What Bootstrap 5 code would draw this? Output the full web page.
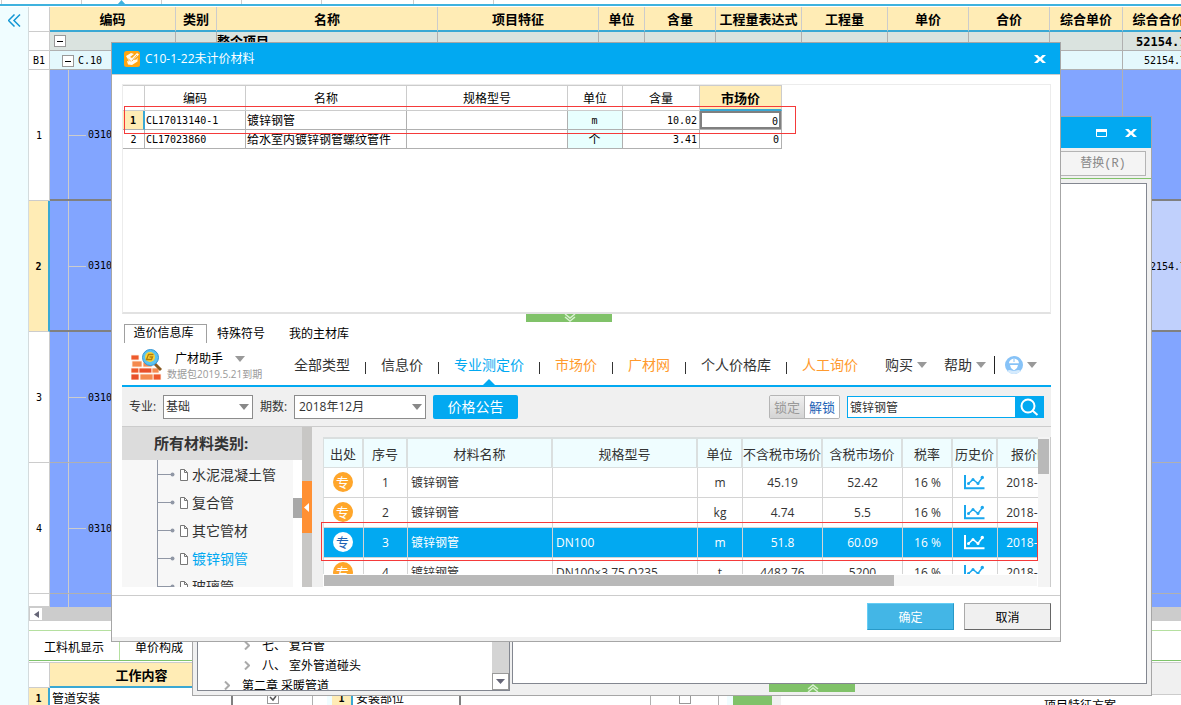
<!DOCTYPE html>
<html lang="zh-CN">
<head>
<meta charset="utf-8">
<meta name="viewport" content="width=device-width, initial-scale=1">
<title>C10-1-22未计价材料</title>
<link href="https://cdn.jsdelivr.net/npm/bootstrap@5.3.0/dist/css/bootstrap.min.css" rel="stylesheet">
<style>
  body { font-family: "Open Sans", "Noto Sans CJK SC", sans-serif; font-size: 12px; line-height: 16px; color: #000; background: #fff; }
  .fixed { font-family: "DejaVu Sans Mono", "Noto Sans CJK SC", monospace; font-size: 10px; }
  a, a:hover { color: inherit; text-decoration: none; }
  svg { display: block; flex: none; }

  /* top strip of the application */
  .strip { height: 6px; border-bottom: 2px solid #3fb2de; margin-bottom: 1px; }
  .strip span { width: 80px; border-right: 1px solid #ccc; }
  .strip svg { position: absolute; left: 117px; top: 0; }
  .rail { width: 29px; background: #f0fdff; border-right: 1px solid #d4dbdd; padding: 7px 0 0 8px; }

  /* spreadsheet style tables */
  .sheet { table-layout: fixed; border-collapse: separate; border-spacing: 0; }
  .sheet th, .sheet td { padding: 0; overflow: hidden; white-space: nowrap; vertical-align: middle; }
  .main-sheet { width: 1175px; }
  .main-sheet thead th { height: 25px; background: #ffecb5; border-right: 1px solid #ccc; border-bottom: 2px solid #3aa8d4; font-size: 13px; text-align: center; }
  .main-sheet thead th.corner { background: #fff; border-bottom: 1px solid #ccc; }
  .main-sheet td, .main-sheet tbody th { height: 19px; border-right: 1px solid #b0b0b0; border-bottom: 1px solid #b0b0b0; }
  .main-sheet tbody th { background: #fff; border-color: #ccc; font-weight: 400; text-align: center; padding-top: 2px; }
  .main-sheet .total td { background: #dae3df; }
  .main-sheet .total td.fixed, .main-sheet .part td.fixed { padding-top: 2px; }
  .main-sheet .part td { background: #e4f8fd; }
  .main-sheet .item td { height: 131px; background: #82a5ff; }
  .main-sheet .item.last td { height: 13px; border-bottom: 0; }
  .main-sheet .item.current td { border-bottom: 2px solid #808080; }
  .main-sheet .item.above td { border-bottom: 2px solid #808080; }
  .main-sheet .item.current td:last-child { background: #c0d0fc; padding-top: 2px; }
  .main-sheet .item.current th { background: #ffecb5; font-weight: 700; border-right: 2px solid #3aa8d4; }
  .fold { width: 12px; height: 12px; border: 1px solid #999; background: #fff; padding: 5px 2px; }
  .fold::before { content: ""; display: block; height: 1px; background: #000; }
  .twig { height: 100%; margin-left: 18px; border-left: 1px solid #ccc; display: flex; align-items: center; padding-top: 1px; }
  .twig i { width: 17px; border-top: 1px solid #ccc; margin-right: 2px; }
  .hbar { height: 14px; background: #ccc; }
  .hbar button { width: 14px; height: 14px; padding: 3px 4px; background: #fff; border: 1px solid #ccc; }

  /* lower docked panels */
  .dock-tabs { height: 31px; margin-top: 9px; border-top: 1px solid #b5e0a0; border-bottom: 1px solid #7fc46b; }
  .dock-tabs a { padding: 9px 15px 0; border-right: 1px solid #b5e0a0; }
  .dock { border-top: 1px solid #ccc; margin-top: 1px; }
  .dock-head { height: 25px; background: #ffecb5; border-bottom: 2px solid #3aa8d4; font-size: 13px; font-weight: 700; text-align: center; line-height: 24px; }
  .dock-row { height: 20px; line-height: 22px; }
  .rowno { width: 21px; background: #ffecb5; border-right: 2px solid #3aa8d4; font-weight: 700; text-align: center; line-height: 22px; }
  .tick { appearance: none; width: 12px; height: 12px; margin: 0; border: 1px solid #999; background: #fff; }
  .tick:checked { background: url("data:image/svg+xml,%3Csvg xmlns='http://www.w3.org/2000/svg' viewBox='0 0 10 10'%3E%3Cpath d='M2 4l3 3 3-4' fill='none' stroke='%23555' stroke-width='1.500'/%3E%3C/svg%3E") center / 10px 10px; }

  /* windows over the sheet */
  .win { position: absolute; border: 1px solid #a6a6a6; }
  .win-title { height: 31px; background: #02a9f1; color: #fff; }
  .win-title button, .bare { border: 0; padding: 0; background: none; }
  .back-win { top: 116px; left: 192px; right: 29px; bottom: 9px; background: #f0f0f0; z-index: 1; }
  .replace { width: 86px; height: 25px; border: 1px solid #b4b4b4; background: #f4f4f4; color: #888; padding: 0; }
  .pane { background: #fff; border: 1px solid #838790; }
  .tree-pane { width: 313px; margin-left: 4px; }
  .tree-pane .node { height: 20px; line-height: 20px; padding-top: 1px; }
  .vbar { width: 17px; background: #d4d4d4; }
  .vbar button { width: 17px; height: 17px; border: 1px solid #999; background: #fff; padding: 0; }
  .grip { width: 86px; height: 8px; background: #80c269; color: #e6f7e0; }

  .dialog-win { top: 42px; left: 111px; right: 120px; background: #fff; z-index: 2; }
  .dialog-body { padding: 9px 9px 8px 10px; border: solid #ccc; border-width: 1px 0; }
  .grid-box { height: 230px; border: 1px solid #ececec; border-bottom: 2px solid #e2e2e2; }
  .mat-sheet { width: 659px; }
  .mat-sheet th { height: 26px; border: solid #ccc; border-width: 1px 1px 1px 0; font-weight: 400; text-align: center; padding-top: 2px; }
  .mat-sheet td { height: 19px; border-right: 1px solid #b0b0b0; border-bottom: 1px solid #b0b0b0; padding: 2px 2px 0 1px; }
  .mat-sheet th.hot { background: #ffecb5; border-bottom: 2px solid #3aa8d4; font-weight: 700; font-size: 13px; padding-top: 0; }
  .mat-sheet td.num { text-align: center; padding: 2px 0 0; }
  .mat-sheet td.num.hot { background: #ffecb5; font-weight: 700; border-right: 2px solid #3aa8d4; }
  .mat-sheet td.unit { background: #e8fffe; }
  .mat-sheet .price { width: 100%; height: 18px; padding: 2px 1px 0; border: 2px solid #808080; text-align: right; display: block; outline: 0; }
  .mark-red { position: absolute; border: 1px solid #f53a3a; pointer-events: none; }
  .mark-top { left: 1px; top: 21px; width: 672px; height: 28px; }
  .mark-low { left: -2px; right: 12px; top: 85px; height: 39px; }

  .src-tabs { height: 19px; margin: 2px 0 0 2px; }
  .src-tabs a { height: 19px; line-height: 20px; }
  .src-tabs .on { width: 83px; border: solid #a0a0a0; border-width: 1px 1px 0; text-align: center; margin-right: 10px; line-height: 16px; padding-right: 4px; }
  .helper { height: 44px; border-bottom: 2px solid #02a9f1; font-size: 14px; color: #333; padding-top: 2px; }
  .brand { width: 172px; padding-left: 9px; }
  .brand-text { padding: 2px 0 0 1px; }
  .expire { font-size: 10px; color: #999; line-height: 14px; }
  .bar { width: 1px; height: 12px; background: #333; margin: 6px 15px 0; }
  .orange { color: #ff9a2e; }
  .blue { color: #02a9f1; }
  .pointer { position: absolute; left: 50%; bottom: -12px; margin-left: -6px; }
  .filter { height: 40px; background: #f0f0f0; border-bottom: 1px solid #ccc; padding: 0 7px; gap: 7px; color: #333; }
  .filter label { width: 27px; white-space: nowrap; }
  .filter .form-select { height: 24px; padding: 0 16px 0 2px; font-size: 12px; line-height: 16px; color: #333; border: 1px solid #8c8c8c; border-radius: 0; background: #fff url("data:image/svg+xml,%3Csvg xmlns='http://www.w3.org/2000/svg' viewBox='0 0 10 6'%3E%3Cpath fill='%23888' d='M0 0h10L5 6z'/%3E%3C/svg%3E") no-repeat right 3px center / 10px 6px; }
  .spec { width: 90px; } .period { width: 132px; }
  .filter .form-select.period { padding-left: 4px; }
  .notice { width: 85px; height: 24px; border: 0; border-radius: 2px; background: #02a9f1; color: #fff; font-size: 14px; padding: 0; }
  .lock { border: 1px solid #b5b5b5; border-radius: 2px; overflow: hidden; width: 71px; height: 24px; }
  .lock button { border: 0; padding: 0; flex: 1; font-size: 13px; background: #fff; color: #1d62b5; }
  .lock button:disabled { background: linear-gradient(#f0f0f0, #d4d4d4); color: #999; border-right: 1px solid #b5b5b5; }
  .search { width: 197px; height: 22px; border: 1px solid #02a9f1; }
  .search input { border: 0; padding: 2px 2px 0; outline: 0; min-width: 0; color: #333; }
  .search button { width: 28px; background: #02a9f1; border: 0; padding: 0 0 0 5px; }

  .lower { height: 160px; background: #f0f0f0; overflow: hidden; color: #333; }
  .cats { width: 180px; }
  .cats-head { height: 33px; background: #dcdcdc; font-size: 15px; font-weight: 700; line-height: 33px; padding-left: 32px; }
  .cats-list { margin: 0; padding: 1px 0 0 35px; list-style: none; background: #f7f7f7; position: relative; font-size: 14px; }
  .cats-list::before { content: ""; position: absolute; left: 35px; top: 0; bottom: 0; width: 1px; background: #9097a5; }
  .cats-list li { height: 28px; }
  .cats-list li svg.br { margin-right: 5px; }
  .cats-list li svg.doc { margin-right: 4px; }
  .thumb { width: 9px; height: 20px; background: #a8a8a8; margin-top: 38px; }
  .split { width: 10px; background: #c8c7c5; padding-top: 54px; }
  .split button { width: 10px; height: 52px; border: 0; padding: 0 0 0 2px; background: #ff9033; display: block; }
  .quotes { margin: 10px 0 0 11px; border-right: 1px solid #ccc; background: #fff; position: relative; }
  .quote-view { height: 137px; overflow: hidden; }
  .quote-sheet { width: 755px; }
  .quote-sheet th { height: 31px; background: #effdff; border: solid #dadfdf; border-width: 2px 2px 1px 0; font-size: 13px; font-weight: 400; text-align: center; padding-top: 1px; }
  .quote-sheet th:first-child, .quote-sheet td:first-child { border-left: 1px solid #dadfdf; }
  .quote-sheet td { height: 30px; border-right: 1px solid #d4d4d4; border-bottom: 1px solid #d4d4d4; text-align: center; }
  .quote-sheet td.txt { text-align: left; padding-left: 3px; }
  .quote-sheet td.pic { padding: 0 2px 2px 0; }
  .quote-sheet .chosen td { background: #02a9f1; color: #fff; }
  .quote-sheet svg { margin: auto; color: #1aa7ee; }
  .quote-sheet .chosen svg { color: #fff; }
  .pro { display: block; width: 20px; height: 20px; line-height: 20px; margin: 0 auto; border-radius: 50%; background: #ffa62b; color: #fff; font-size: 13px; }
  .chosen .pro { background: #fff; color: #1d62b5; }
  .q-vbar { width: 12px; background: #f4f4f4; padding-top: 2px; }
  .q-vbar div { height: 35px; background: #b9b9b9; margin-right: 1px; }
  .q-hbar { height: 13px; border: 1px solid #fff; background: #f7f7f7; }
  .q-hbar div { width: 80%; height: 11px; background: #b9b9b9; }
  .dialog-foot { height: 45px; border-bottom: 4px solid #f0f0f0; padding: 7px 9px 0; gap: 10px; }
  .dialog-foot button { width: 87px; height: 27px; padding: 2px 0 0; border: 1px solid; background: #f0f0f0; border-color: #aaa #666 #666 #aaa; }
  .dialog-foot .ok { background: #43b6e6; color: #fff; border-color: #65cdf5 #2899c8 #2899c8 #65cdf5; }
</style>
</head>
<body class="vh-100 overflow-hidden position-relative d-flex flex-column">

<svg width="0" height="0" class="position-absolute">
  <symbol id="chart" viewBox="0 0 21 16"><path d="M1 1v13.200h19.500" fill="none" stroke="currentColor" stroke-width="2"/><path d="M4.500 9.500 9 5.500l5 4 4.500-6" fill="none" stroke="currentColor" stroke-width="1.500"/><g fill="currentColor"><circle cx="4.500" cy="9.500" r="1.500"/><circle cx="9" cy="5.500" r="1.500"/><circle cx="14" cy="9.500" r="1.500"/><circle cx="18.300" cy="3.500" r="1.700"/></g></symbol>
  <symbol id="doc" viewBox="0 0 8 12"><path d="M.5.500h4l3 3v8h-7zM4.500.500v3h3" fill="#fff" stroke="#777"/></symbol>
  <symbol id="branch" viewBox="0 0 18 6"><path d="M0 2.500h17" stroke="#9097a5"/><circle cx="15.500" cy="2.500" r="2" fill="#9097a5"/></symbol>
  <symbol id="down" viewBox="0 0 10 6"><path d="M0 0h10L5 6z" fill="#999"/></symbol>
  <symbol id="cross" viewBox="0 0 12 10"><path d="M0 1h3.500L6 3.500 8.500 1H12L8 5l4 4H8.500L6 6.500 3.500 9H0l4-4z" fill="#fff"/></symbol>
  <symbol id="next" viewBox="0 0 6 9"><path d="M1 .5l4 4-4 4" fill="none" stroke="#aaa" stroke-width="2"/></symbol>
</svg>

<div class="strip d-flex position-relative flex-shrink-0">
  <span style="width:2px"></span><span></span><span></span><span></span><span></span><span style="width:92px"></span><span></span>
  <svg width="9" height="5"><path d="M0 5l4.500-5L9 5z" fill="#3fb2de"/></svg>
</div>

<div class="d-flex flex-grow-1 overflow-hidden">
  <aside class="rail flex-shrink-0">
    <button class="bare" aria-label="收起"><svg width="13" height="13"><path d="M6.500.500l-6 6 6 6M12 .5l-6 6 6 6" fill="none" stroke="#1497d4" stroke-width="1.500"/></svg></button>
  </aside>
  <main class="flex-grow-1 overflow-hidden">
    <table class="sheet main-sheet">
      <colgroup><col style="width:21px"><col style="width:126px"><col style="width:41px"><col style="width:221px"><col style="width:161px"><col style="width:46px"><col style="width:71px"><col style="width:86px"><col style="width:86px"><col style="width:81px"><col style="width:81px"><col style="width:73px"><col style="width:81px"></colgroup>
      <thead><tr><th class="corner"></th><th>编码</th><th>类别</th><th>名称</th><th>项目特征</th><th>单位</th><th>含量</th><th>工程量表达式</th><th>工程量</th><th>单价</th><th>合价</th><th>综合单价</th><th style="padding-right:9px">综合合价</th></tr></thead>
      <tbody>
        <tr class="total"><th></th><td><div class="fold ms-1" style="margin-left:2px"></div></td><td></td><td style="font-size:13px"><b>整个项目</b></td><td></td><td></td><td></td><td></td><td></td><td></td><td></td><td></td><td class="fixed" style="padding-left:13px;font-size:12px"><b>52154.78</b></td></tr>
        <tr class="part"><th class="fixed">B1</th><td class="fixed"><div class="d-flex align-items-center" style="padding-left:12px"><div class="fold me-1"></div>C.10</div></td><td></td><td></td><td></td><td></td><td></td><td></td><td></td><td></td><td></td><td></td><td class="fixed" style="padding-left:21px">52154.78</td></tr>
        <tr class="item above"><th class="fixed">1</th><td class="fixed"><div class="twig"><i></i>031001</div></td><td></td><td></td><td></td><td></td><td></td><td></td><td></td><td></td><td></td><td></td><td></td></tr>
        <tr class="item current"><th class="fixed">2</th><td class="fixed"><div class="twig"><i></i>031001</div></td><td></td><td></td><td></td><td></td><td></td><td></td><td></td><td></td><td></td><td></td><td class="fixed" style="padding-left:21px">52154.78</td></tr>
        <tr class="item"><th class="fixed">3</th><td class="fixed"><div class="twig"><i></i>031001</div></td><td></td><td></td><td></td><td></td><td></td><td></td><td></td><td></td><td></td><td></td><td></td></tr>
        <tr class="item"><th class="fixed">4</th><td class="fixed"><div class="twig"><i></i>031001</div></td><td></td><td></td><td></td><td></td><td></td><td></td><td></td><td></td><td></td><td></td><td></td></tr>
        <tr class="item last"><th style="height:13px"></th><td><div class="twig"></div></td><td></td><td></td><td></td><td></td><td></td><td></td><td></td><td></td><td></td><td></td><td></td></tr>
      </tbody>
    </table>
    <div class="hbar d-flex"><button aria-label="向左"><svg width="5" height="7"><path d="M5 0v7L0 3.500z" fill="#667"/></svg></button></div>
    <nav class="dock-tabs d-flex"><a href="#">工料机显示</a><a href="#" class="border-end-0">单价构成</a></nav>
    <div class="dock d-flex">
      <div style="width:204px" class="flex-shrink-0">
        <div class="d-flex"><div style="width:21px;border:solid #ccc;border-width:0 1px 1px 0"></div><div class="dock-head flex-grow-1">工作内容</div></div>
        <div class="d-flex dock-row"><div class="rowno fixed">1</div><div class="flex-grow-1" style="border-right:2px solid #808080;padding-left:2px">管道安装</div></div>
      </div>
      <div class="d-flex align-items-end flex-shrink-0" style="height:45px">
        <div class="d-flex justify-content-center" style="width:80px;border-right:1px solid #b0b0b0;height:20px"><input type="checkbox" checked class="tick mt-1" aria-label="管道安装"></div>
        <div style="width:14px;height:20px"></div><div style="width:5px;height:20px;background:#f0fdff"></div>
        <div class="rowno fixed" style="height:20px">1</div>
        <div class="dock-row" style="width:108px;border-right:2px solid #808080;padding-left:3px">安装部位</div>
        <div style="width:190px;height:20px;border-right:1px solid #b0b0b0"></div>
        <div class="d-flex justify-content-center" style="width:68px;height:20px;border-right:1px solid #b0b0b0"><input type="checkbox" class="tick mt-1" aria-label="安装部位"></div>
        <div style="width:8px;height:20px"></div><div style="width:6px;height:20px;background:#f0fdff"></div>
        <div style="width:39px;height:20px;background:#80c269"></div><div style="width:9px;height:20px;background:#f0f0f0"></div>
      </div>
      <div class="flex-grow-1 d-flex flex-column">
        <div style="height:32px;background:#f0f0f0;border-bottom:1px solid #ccc"></div>
        <div class="text-center text-nowrap" style="padding:3px 0 0 198px">项目特征方案</div>
      </div>
    </div>
  </main>
</div>

<section class="win back-win d-flex flex-column">
  <header class="win-title d-flex align-items-center justify-content-end flex-shrink-0" style="padding-right:14px;gap:18px">
    <button aria-label="最大化"><svg width="11" height="8"><path d="M.5.500h10v7H.5z" fill="none" stroke="#fff"/><path d="M0 0h11v3H0z" fill="#fff"/></svg></button>
    <button aria-label="关闭"><svg width="12" height="10"><use href="#cross"/></svg></button>
  </header>
  <div class="d-flex justify-content-end flex-shrink-0" style="height:31px;padding:3px 5px;border-bottom:1px solid #80c269">
    <button class="replace" disabled>替换<span style="font-family:'Liberation Mono',monospace">(R)</span></button>
  </div>
  <div class="d-flex flex-grow-1" style="padding-top:4px;gap:2px">
    <div class="pane tree-pane d-flex flex-shrink-0" style="margin-bottom:4px">
      <div class="flex-grow-1 d-flex flex-column justify-content-end overflow-hidden">
        <div class="node d-flex align-items-center" style="padding-left:46px"><svg width="6" height="9" class="me-2"><use href="#next"/></svg><span class="ms-1">七、 复合管</span></div>
        <div class="node d-flex align-items-center" style="padding-left:46px"><svg width="6" height="9" class="me-2"><use href="#next"/></svg><span class="ms-1">八、 室外管道碰头</span></div>
        <div class="node d-flex align-items-center" style="padding-left:26px;margin-bottom:-5px"><svg width="6" height="9" class="me-2"><use href="#next"/></svg><span class="ms-1">第二章 采暖管道</span></div>
      </div>
      <div class="vbar d-flex align-items-end"><button aria-label="向下"><svg width="9" height="5" class="m-auto"><path d="M0 0h9L4.500 5z" fill="#667"/></svg></button></div>
    </div>
    <div class="flex-grow-1 d-flex flex-column" style="margin-right:4px">
      <div class="pane flex-grow-1"></div>
      <div style="height:11px;padding-left:257px"><div class="grip"><svg width="86" height="8"><path d="M39 5l5-4 5 4M39 8l5-4 5 4" fill="none" stroke="#d8f0d0" stroke-width="1.500"/></svg></div></div>
    </div>
  </div>
</section>

<section class="win dialog-win" role="dialog" aria-label="C10-1-22未计价材料">
  <header class="win-title d-flex align-items-center" style="padding:0 14px 0 12px">
    <svg width="16" height="16" style="margin-right:5px"><rect width="16" height="16" rx="2.500" fill="#ffa512"/><path d="M2 5l5-3 3 1-4 3 2 1 5-5 2 1.500L9.500 9l3-.5 1-2v4L8 14l-4-.5L3 10l2 .5z" fill="#fff" opacity=".93"/><path d="M4 7.500l3 3M8 10l5-6" stroke="#f59a0c" stroke-width=".8"/></svg>
    <span>C10-1-22未计价材料</span>
    <button class="ms-auto" aria-label="关闭"><svg width="12" height="10"><use href="#cross"/></svg></button>
  </header>
  <div class="dialog-body">
    <div class="grid-box position-relative">
      <table class="sheet mat-sheet">
        <colgroup><col style="width:22px"><col style="width:101px"><col style="width:161px"><col style="width:161px"><col style="width:55px"><col style="width:77px"><col style="width:82px"></colgroup>
        <thead><tr><th></th><th>编码</th><th>名称</th><th>规格型号</th><th>单位</th><th>含量</th><th class="hot">市场价</th></tr></thead>
        <tbody>
          <tr><td class="num hot fixed">1</td><td class="fixed">CL17013140-1</td><td>镀锌钢管</td><td></td><td class="unit fixed text-center">m</td><td class="fixed text-end">10.02</td><td class="p-0"><input class="price fixed" value="0" aria-label="市场价"></td></tr>
          <tr><td class="num fixed">2</td><td class="fixed">CL17023860</td><td>给水室内镀锌钢管螺纹管件</td><td></td><td class="unit text-center">个</td><td class="fixed text-end">3.41</td><td class="fixed text-end">0</td></tr>
        </tbody>
      </table>
      <div class="mark-red mark-top"></div>
    </div>
    <div class="grip" style="margin-left:404px"><svg width="86" height="8"><path d="M39 0l5 4 5-4M39 3l5 4 5-4" fill="none" stroke="#d8f0d0" stroke-width="1.500"/></svg></div>
    <nav class="src-tabs d-flex"><a href="#" class="on">造价信息库</a><a href="#" style="margin-right:24px">特殊符号</a><a href="#">我的主材库</a></nav>

    <nav class="helper d-flex align-items-center">
      <div class="brand d-flex gap-1 flex-shrink-0">
        <svg width="31" height="31" viewBox="0 0 31 31">
          <g stroke="#fff3e8" stroke-width=".8"><path d="M0 6h8v5H0zM0 19h8v5H0zM22 25h8v6h-8z" fill="#ee5a2c"/><path d="M1 12h10v6H1zM9 25h13v6H9z" fill="#f48a4e"/><path d="M8 19h13v5H8zM0 25h8v6H0z" fill="#e8502a"/><path d="M12 13h9v5h-9zM21 19h7v5h-7z" fill="#f48a4e"/></g>
          <path d="M23 14l7 7" stroke="#8a5a20" stroke-width="3"/><circle cx="19.500" cy="8.500" r="8" fill="#5cc3f0" stroke="#3596d4"/><circle cx="19" cy="8" r="5" fill="#f9d43a"/><path d="M22.500 5.500h-5l-2 5h5l1-2.500h-3" fill="none" stroke="#b57d08" stroke-width="1.300"/>
        </svg>
        <div class="brand-text"><a href="#" class="d-flex align-items-center ms-2" style="font-size:12px;color:#000;gap:12px">广材助手 <svg width="10" height="6"><use href="#down"/></svg></a><div class="expire text-nowrap">数据包2019.5.21到期</div></div>
      </div>
      <a href="#">全部类型</a><i class="bar"></i><a href="#">信息价</a><i class="bar"></i><a href="#" class="blue position-relative">专业测定价<svg class="pointer" width="12" height="6"><path d="M0 6l6-6 6 6z" fill="#02a9f1"/></svg></a><i class="bar"></i><a href="#" class="orange">市场价</a><i class="bar"></i><a href="#" class="orange">广材网</a><i class="bar"></i><a href="#">个人价格库</a><i class="bar"></i><a href="#" class="orange">人工询价</a>
      <a href="#" class="ms-auto d-flex align-items-center gap-1" style="margin-right:17px">购买<svg width="10" height="6"><use href="#down"/></svg></a>
      <a href="#" class="d-flex align-items-center gap-1">帮助<svg width="10" height="6"><use href="#down"/></svg></a>
      <i style="width:1px;height:18px;background:#222;margin:0 10px 0 8px"></i>
      <a href="#" class="d-flex align-items-center gap-1" style="margin-right:14px" aria-label="账户"><svg width="18" height="18"><circle cx="9" cy="9" r="9" fill="#86c2f7"/><path d="M4 7.500C4 1 14 1 14 7.500zM5 9h8l-1 3-3 2.500L6 12z" fill="#fff"/><path d="M2 15c3-2 5 0 7 0s4-2 7 0c-4 4-10 4-14 0z" fill="#d6ebfd"/><path d="M3 8h12M9 3v3" stroke="#86c2f7"/></svg><svg width="10" height="6"><use href="#down"/></svg></a>
    </nav>

    <form class="filter d-flex align-items-center" onsubmit="return false">
      <label for="spec">专业:</label><select id="spec" class="form-select spec"><option>基础</option></select>
      <label for="period">期数:</label><select id="period" class="form-select period"><option>2018年12月</option></select>
      <button type="button" class="notice">价格公告</button>
      <div class="lock d-flex ms-auto"><button type="button" disabled>锁定</button><button type="button">解锁</button></div>
      <div class="search d-flex"><input class="flex-grow-1" value="镀锌钢管" aria-label="搜索材料"><button aria-label="搜索"><svg width="20" height="18"><circle cx="8" cy="8" r="6.500" fill="none" stroke="#fff" stroke-width="2"/><path d="M12.500 12.500l5 4.500" stroke="#fff" stroke-width="2"/></svg></button></div>
    </form>

    <div class="lower d-flex">
      <div class="cats flex-shrink-0">
        <div class="cats-head">所有材料类别:</div>
        <div class="d-flex bg-white">
          <ul class="cats-list flex-grow-1">
            <li class="d-flex align-items-center"><svg class="br" width="18" height="6"><use href="#branch"/></svg><svg class="doc" width="8" height="12"><use href="#doc"/></svg><a href="#">水泥混凝土管</a></li>
            <li class="d-flex align-items-center"><svg class="br" width="18" height="6"><use href="#branch"/></svg><svg class="doc" width="8" height="12"><use href="#doc"/></svg><a href="#">复合管</a></li>
            <li class="d-flex align-items-center"><svg class="br" width="18" height="6"><use href="#branch"/></svg><svg class="doc" width="8" height="12"><use href="#doc"/></svg><a href="#">其它管材</a></li>
            <li class="d-flex align-items-center"><svg class="br" width="18" height="6"><use href="#branch"/></svg><svg class="doc" width="8" height="12"><use href="#doc"/></svg><a href="#" class="blue">镀锌钢管</a></li>
            <li class="d-flex align-items-center"><svg class="br" width="18" height="6"><use href="#branch"/></svg><svg class="doc" width="8" height="12"><use href="#doc"/></svg><a href="#">玻璃管</a></li>
          </ul>
          <div class="thumb"></div>
        </div>
      </div>
      <div class="split flex-shrink-0"><button aria-label="折叠"><svg width="5" height="9"><path d="M5 0v9L0 4.500z" fill="#fff"/></svg></button></div>
      <div class="quotes flex-grow-1 d-flex overflow-visible" style="min-width:0">
        <div class="flex-grow-1" style="min-width:0">
          <div class="quote-view">
            <table class="sheet quote-sheet">
              <colgroup><col style="width:41px"><col style="width:44px"><col style="width:145px"><col style="width:145px"><col style="width:45px"><col style="width:80px"><col style="width:80px"><col style="width:50px"><col style="width:45px"><col style="width:80px"></colgroup>
              <thead><tr><th>出处</th><th>序号</th><th>材料名称</th><th>规格型号</th><th>单位</th><th>不含税市场价</th><th>含税市场价</th><th>税率</th><th>历史价</th><th>报价时间</th></tr></thead>
              <tbody>
                <tr><td class="pic"><span class="pro">专</span></td><td>1</td><td class="txt">镀锌钢管</td><td class="txt"></td><td>m</td><td>45.19</td><td>52.42</td><td>16 %</td><td class="pic"><svg width="21" height="16"><use href="#chart"/></svg></td><td>2018-12-03</td></tr>
                <tr><td class="pic"><span class="pro">专</span></td><td>2</td><td class="txt">镀锌钢管</td><td class="txt"></td><td>kg</td><td>4.74</td><td>5.5</td><td>16 %</td><td class="pic"><svg width="21" height="16"><use href="#chart"/></svg></td><td>2018-12-03</td></tr>
                <tr class="chosen"><td class="pic"><span class="pro">专</span></td><td>3</td><td class="txt">镀锌钢管</td><td class="txt">DN100</td><td>m</td><td>51.8</td><td>60.09</td><td>16 %</td><td class="pic"><svg width="21" height="16"><use href="#chart"/></svg></td><td>2018-12-03</td></tr>
                <tr><td class="pic"><span class="pro">专</span></td><td>4</td><td class="txt">镀锌钢管</td><td class="txt">DN100×3.75 Q235</td><td>t</td><td>4482.76</td><td>5200</td><td>16 %</td><td class="pic"><svg width="21" height="16"><use href="#chart"/></svg></td><td>2018-12-03</td></tr>
              </tbody>
            </table>
          </div>
          <div class="q-hbar"><div></div></div>
        </div>
        <div class="q-vbar flex-shrink-0"><div></div></div>
        <div class="mark-red mark-low"></div>
      </div>
    </div>
  </div>
  <footer class="dialog-foot d-flex justify-content-end"><button class="ok">确定</button><button>取消</button></footer>
</section>

<script src="https://cdn.jsdelivr.net/npm/bootstrap@5.3.0/dist/js/bootstrap.bundle.min.js"></script>
</body>
</html>
